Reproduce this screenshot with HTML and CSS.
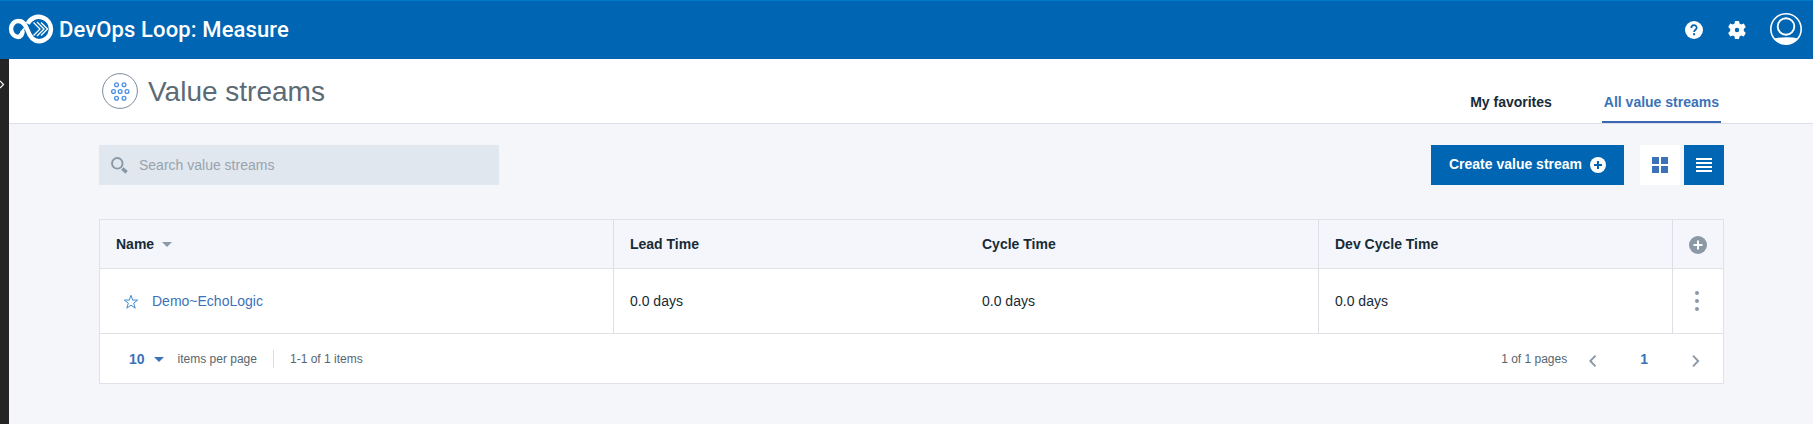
FILE: index.html
```html
<!DOCTYPE html>
<html lang="en">
<head>
<meta charset="utf-8">
<title>DevOps Loop: Measure</title>
<link rel="stylesheet" href="styles.css">
</head>
<body>
<header class="topbar">
  <svg class="logo" width="46" height="32" viewBox="0 0 46 32" fill="none" stroke="#fff">
    <path d="M14.800 17C14.200 21 12.500 23 10 23A7 7.800 0 0 1 10.500 7C15.500 7 17.500 11 19.500 16C22 23.500 26 27.200 31 27.200A12.200 12.200 0 1 0 19.700 9.800" stroke-width="4.400"/>
    <path d="M17 12.800C16.500 16.500 15.800 21 12 24.500L10.500 20.500C12.500 19 13.500 15 17 12.800Z" fill="#fff" stroke="none"/>
    <path d="M25.500 8.500l6.500 6.500-6.500 6.500M29 8l7 7-7 7M33 8.500l6.500 6.500-6.500 6.500" stroke-width="1.300"/>
  </svg>
  <span class="brand">DevOps Loop: Measure</span>
  <div class="tools">
    <svg width="18" height="18" viewBox="0 0 18 18"><circle cx="9" cy="9" r="9" fill="#fff"/><path d="M6.300 7C6.300 3.200 11.700 3.300 11.700 6.800C11.700 8.800 9.100 8.700 9.100 11" fill="none" stroke="#0064b3" stroke-width="1.700"/><rect x="8.100" y="12.200" width="2" height="2" fill="#0064b3"/></svg>
    <svg width="18" height="18" viewBox="0 0 18 18"><path fill="#fff" fill-rule="evenodd" d="M7 0h4l.5 2.600 1.700 1 2.600-1 2 3.500-2 1.800v2.200l2 1.800-2 3.500-2.600-1-1.700 1L11 18H7l-.5-2.600-1.700-1-2.600 1-2-3.500 2-1.800V7.900l-2-1.800 2-3.500 2.600 1 1.700-1zM9 6.800a2.200 2.200 0 1 0 0 4.400a2.200 2.200 0 1 0 0-4.400z"/></svg>
    <svg class="avatar" width="32" height="32" viewBox="0 0 32 32"><circle cx="16" cy="16" r="15.200" fill="none" stroke="#fff" stroke-width="1.600"/><circle cx="16" cy="13.500" r="8.300" fill="none" stroke="#fff" stroke-width="1.900"/><path d="M4 25.500Q8 24.300 16 24.300T28 25.500A15.300 15.300 0 0 1 4 25.500Z" fill="#fff"/></svg>
  </div>
</header>
<div class="shell">
  <aside class="rail"><svg width="5" height="9" viewBox="0 0 5 9"><path d="M0 1l3.500 3.500L0 8" fill="none" stroke="#fff" stroke-width="1.200"/></svg></aside>
  <main class="main">
    <div class="pagehead">
      <svg class="badge" width="36" height="36" viewBox="0 0 36 36" fill="none"><circle cx="18" cy="18" r="17.400" stroke="#7c8a9b" fill="#fff"/><g stroke="#4b8fe6" stroke-width="1.300"><circle cx="14.500" cy="11.800" r="1.900"/><circle cx="22" cy="11.800" r="1.900"/><circle cx="11.500" cy="18.500" r="1.900"/><circle cx="18.200" cy="18.500" r="1.900"/><circle cx="25" cy="18.500" r="1.900"/><circle cx="14.500" cy="25.300" r="1.900"/><circle cx="22" cy="25.300" r="1.900"/></g></svg>
      <h1 class="title">Value streams</h1>
      <nav class="tabs"><a class="tab">My favorites</a><a class="tab active">All value streams</a></nav>
    </div>
    <div class="content">
      <div class="toolbar">
        <div class="search"><svg width="17" height="17" viewBox="0 0 17 17" fill="none" stroke="#8b98a5"><circle cx="6.300" cy="6.300" r="5.300" stroke-width="1.900"/><path d="M11.300 11.500l4.300 3.800" stroke-width="3.600"/></svg><span>Search value streams</span></div>
        <button class="create"><span>Create value stream</span><svg width="16" height="16" viewBox="0 0 16 16"><circle cx="8" cy="8" r="8" fill="#fff"/><path d="M8 4v8M4 8h8" stroke="#0064b3" stroke-width="2"/></svg></button>
        <button class="view grid"><svg width="16" height="16" viewBox="0 0 16 16"><path fill="#3b72b8" d="M0 0h7v7H0zM9 0h7v7H9zM0 9h7v7H0zM9 9h7v7H9z"/></svg></button>
        <button class="view list"><svg width="16" height="14" viewBox="0 0 16 14"><path fill="#fff" d="M0 0h16v2H0zM0 4h16v2H0zM0 8h16v2H0zM0 12h16v2H0z"/></svg></button>
      </div>
      <section class="table">
        <div class="row head">
          <div class="cell first">Name<svg class="sort" width="10" height="5" viewBox="0 0 10 5"><path d="M0 0h10L5 5z" fill="#8b98a5"/></svg></div>
          <div class="cell line">Lead Time</div><div class="cell">Cycle Time</div><div class="cell line">Dev Cycle Time</div>
          <div class="cell line end"><svg width="18" height="18" viewBox="0 0 18 18"><circle cx="9" cy="9" r="9" fill="#8b98a5"/><path d="M9 4.500v9M4.500 9h9" stroke="#fff" stroke-width="2"/></svg></div>
        </div>
        <div class="row data">
          <div class="cell name"><svg width="16" height="16" viewBox="0 0 16 16"><path d="M8 1.300l1.700 4.800h5L10.700 9.200l1.500 5L8 11.200l-4.200 3 1.500-5-4-3.100h5z" fill="none" stroke="#3f8ccc"/></svg><a>Demo~EchoLogic</a></div>
          <div class="cell line">0.0 days</div><div class="cell">0.0 days</div><div class="cell line">0.0 days</div>
          <div class="cell line end"><svg class="dots" width="4" height="20" viewBox="0 0 4 20" fill="#8b98a5"><circle cx="2" cy="2" r="2"/><circle cx="2" cy="10" r="2"/><circle cx="2" cy="18" r="2"/></svg></div>
        </div>
        <div class="pager">
          <b class="size">10</b><svg class="drop" width="10" height="5" viewBox="0 0 10 5"><path d="M0 0h10L5 5z" fill="#3b72b8"/></svg>
          <span>items per page</span><i class="sep"></i><span>1-1 of 1 items</span>
          <span class="pages">1 of 1 pages</span>
          <svg class="arrow" width="8" height="12" viewBox="0 0 8 12"><path d="M6.500 .7L1.300 6l5.200 5.300" fill="none" stroke="#8b98a5" stroke-width="1.900"/></svg>
          <b class="current">1</b>
          <svg class="arrow" width="8" height="12" viewBox="0 0 8 12"><path d="M1 .7L6.200 6 1 11.300" fill="none" stroke="#8b98a5" stroke-width="1.900"/></svg>
        </div>
      </section>
    </div>
  </main>
</div>
</body>
</html>
```
FILE: styles.css
```css
* { box-sizing: border-box; }
body { margin: 0; height: 424px; overflow: hidden; font: 14px/20px "Liberation Sans", Arial, sans-serif; color: #172b36; }
svg { display: block; flex: none; }
.topbar { height: 59px; display: flex; align-items: center; background: #0065b2; border-top: 1px solid #0078c8; padding: 0 11px 0 8px; color: #fff; }
.logo { margin: 0 5px 1px 0; }
.brand { font: 500 22px/30px Roboto, sans-serif; letter-spacing: .12px; white-space: nowrap; }
.tools { margin-left: auto; display: flex; align-items: center; margin-bottom: 1px; }
.tools svg:nth-child(2) { margin-left: 25px; }
.tools .avatar { margin: 0 0 2px 24px; }
.shell { display: flex; height: 365px; }
.rail { width: 9px; background: #242424; padding-top: 21px; }
.main { flex: 1; min-width: 0; background: #f5f6fa; }
.pagehead { height: 65px; display: flex; background: #fff; border-bottom: 1px solid #dddfea; padding: 0 92px 0 93px; }
.badge { margin-top: 14px; }
.title { margin: 16px 0 0 10px; font-size: 28px; line-height: 34px; font-weight: 400; color: #5a6b75; }
.tabs { margin-left: auto; display: flex; gap: 48px; }
.tab { padding: 33px 2px 0; font-weight: 700; }
.active { color: #3b72b8; border-bottom: 2px solid #3b67b0; }
.content { padding: 21px 89px 0 90px; }
.toolbar { display: flex; height: 40px; }
.search { width: 400px; display: flex; align-items: center; gap: 11px; padding-left: 12px; background: #e0e7ef; color: #98a3ad; }
button { border: 0; padding: 0; font: inherit; display: flex; align-items: center; justify-content: center; color: #fff; background: #0065b3; }
.create { width: 193px; margin-left: auto; font-weight: 700; gap: 8px; }
.create span { margin-bottom: 2px; }
.view { width: 40px; }
.grid { margin: 0 4px 0 16px; background: #fff; }
.table { margin: 34px 0 0; border: 1px solid #e0e1e9; background: #fff; }
.row { display: grid; grid-template-columns: 513px 352px 353px 354px 1fr; border-bottom: 1px solid #e1e2e6; }
.head { height: 49px; background: #f5f6fc; font-weight: 700; }
.data { height: 65px; }
.cell { display: flex; align-items: center; padding-left: 16px; border-left: 1px solid transparent; }
.cell.first { padding-left: 15px; }
.line { border-left-color: #dcdfe6; }
.cell.end { padding: 0; justify-content: center; }
.head .end { padding-top: 1px; }
.data .end { padding-right: 2px; }
.sort { margin-left: 8px; }
.name { color: #3b72b8; gap: 13px; padding-left: 22px; }
.name svg { margin-top: 2px; }
.pager { height: 49px; display: flex; align-items: center; padding: 0 23px 0 29px; font-size: 12px; color: #56666f; }
.pager b { font-size: 14px; color: #3b72b8; }
.drop { margin: 2px 14px 0 9px; }
.sep { width: 1px; height: 18px; background: #d6e0e2; margin: 0 16px; }
.pages { margin-left: auto; }
.arrow { margin-top: 4px; }
.pages + .arrow { margin-left: 22px; }
.current { margin: 0 44px 0 43px; }
```
